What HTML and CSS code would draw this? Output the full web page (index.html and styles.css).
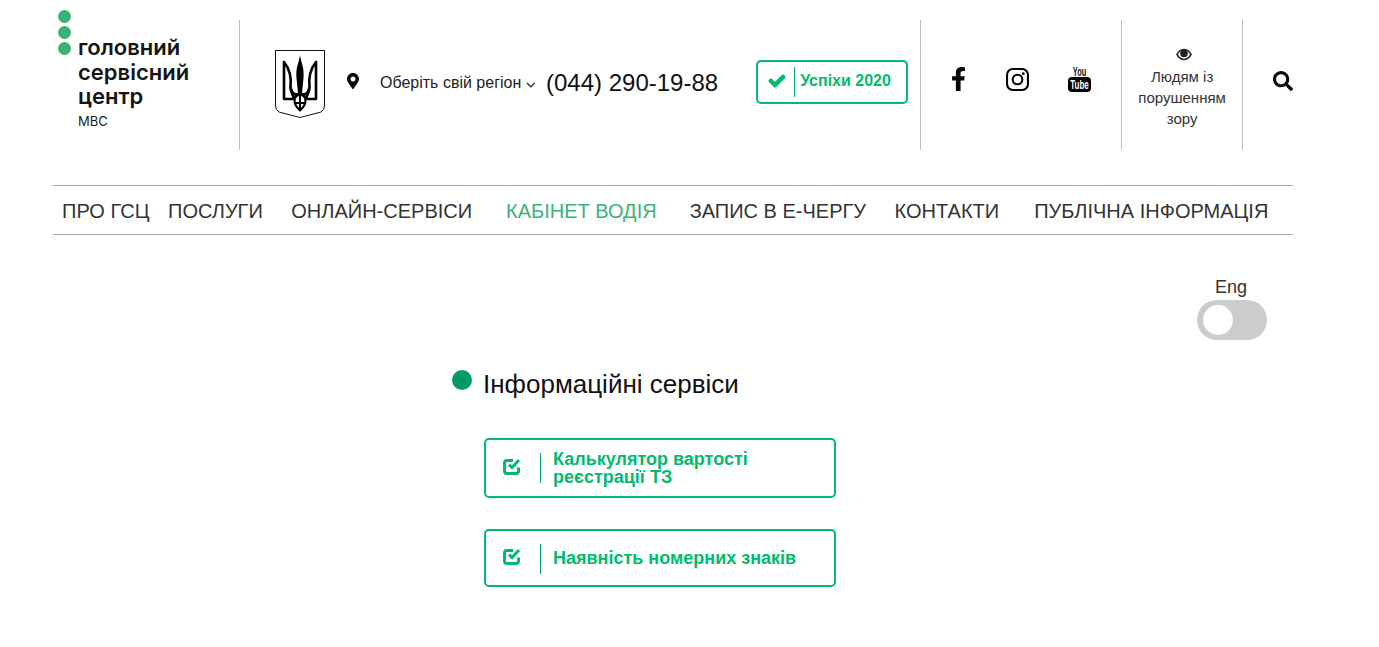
FILE: index.html
```html
<!DOCTYPE html>
<html lang="uk">
<head>
<meta charset="utf-8">
<title>Головний сервісний центр МВС</title>
<link rel="stylesheet" href="styles.css">
</head>
<body>
<div class="page">
  <header class="header">
    <a class="logo">
      <span class="logo-dots"><i></i><i></i><i></i></span>
      <span class="logo-text">
        <span class="logo-name">головний<br>сервісний<br>центр</span>
        <span class="logo-sub">МВС</span>
      </span>
    </a>
    <span class="divider"></span>
    <svg class="emblem" viewBox="0 0 50 68" aria-hidden="true">
      <path class="shield" d="M.5.5H49.500V56Q49.500 60 46 62L25 67.500 4 62Q.5 60 .5 56Z"/>
      <path class="spear" d="M25 5C26 13 29.500 17 28.500 28L27 43H23L21.500 28C20.500 17 24 13 25 5Z"/>
      <path class="prong" d="M9 12V49H19C18 44 15.500 43 15.500 37 16.500 28 15.500 20 9 12Z"/>
      <path class="prong" d="M41 12V49H31C32 44 34.500 43 34.500 37 33.500 28 34.500 20 41 12Z"/>
      <path class="prong" d="M15.500 37Q17 46 23 44M34.500 37Q33 46 27 44M19 49Q21 45 25 44 29 45 31 49"/>
      <path class="prong-thin" d="M20 49Q18 54 25 60.500 32 54 30 49M25 44V60M20.500 53H29.500"/>
    </svg>
    <svg class="marker" viewBox="0 0 384 512" aria-hidden="true"><path d="M172.268 501.67C26.97 291.031 0 268.413 0 192 0 85.961 85.961 0 192 0s192 85.961 192 192c0 76.413-26.97 99.031-172.268 309.67-9.535 13.774-29.93 13.773-39.464 0zM192 272c44.183 0 80-35.817 80-80s-35.817-80-80-80-80 35.817-80 80 35.817 80 80 80z"/></svg>
    <a class="region">Оберіть свій регіон
      <svg class="chevron" viewBox="0 0 10 6" aria-hidden="true"><path d="M1 1l4 4 4-4"/></svg>
    </a>
    <a class="phone">(044) 290-19-88</a>
    <a class="success">
      <svg class="success-check" viewBox="0 0 512 512" aria-hidden="true"><path d="M173.898 439.404l-166.4-166.4c-9.997-9.997-9.997-26.206 0-36.204l36.203-36.204c9.997-9.998 26.207-9.998 36.204 0L192 312.69 432.095 72.596c9.997-9.997 26.207-9.997 36.204 0l36.203 36.204c9.997 9.997 9.997 26.206 0 36.204l-294.4 294.401c-9.998 9.997-26.207 9.997-36.204-.001z"/></svg>
      <span class="success-rule"></span>
      <span class="success-text">Успіхи 2020</span>
    </a>
    <span class="divider divider-social"></span>
    <div class="social">
      <svg class="icon-fb" viewBox="0 0 320 512" aria-hidden="true"><path d="M279.14 288l14.22-92.66h-88.91v-60.13c0-25.35 12.42-50.06 52.24-50.06h40.42V6.26S260.43 0 225.36 0c-73.22 0-121.08 44.38-121.08 124.72v70.62H22.89V288h81.39v224h100.17V288z"/></svg>
      <svg class="icon-ig" viewBox="0 0 22 22" aria-hidden="true">
        <rect class="ig-line" x="1" y="1" width="20" height="20" rx="5.500"/>
        <circle class="ig-line" cx="11" cy="11" r="4.600"/>
        <circle cx="16.600" cy="5.400" r="1.300"/>
      </svg>
      <svg class="icon-yt" viewBox="0 -2 23 27" aria-hidden="true">
        <text class="yt-you" transform="translate(11.500 9) scale(.74 1.200)">You</text>
        <rect x="0" y="10" width="23" height="15" rx="4"/>
        <text class="yt-tube" transform="translate(11.500 21.500) scale(.8 1.250)">Tube</text>
      </svg>
    </div>
    <span class="divider"></span>
    <div class="vision">
      <svg class="eye" viewBox="0 0 16 13" aria-hidden="true">
        <path class="eye-white" d="M1 6.500C3 3 5.300 1.500 8 1.500S13 3 15 6.500C13 10 10.700 11.500 8 11.500S3 10 1 6.500Z"/>
        <circle cx="8" cy="5.500" r="3.800"/>
      </svg>
      <span class="vision-text">Людям із<br>порушенням<br>зору</span>
    </div>
    <span class="divider"></span>
    <svg class="search" viewBox="0 0 512 512" aria-hidden="true"><path d="M505 442.7L405.3 343c-4.5-4.5-10.6-7-17-7H372c27.6-35.3 44-79.7 44-128C416 93.1 322.9 0 208 0S0 93.1 0 208s93.1 208 208 208c48.3 0 92.7-16.4 128-44v16.3c0 6.4 2.5 12.5 7 17l99.7 99.7c9.4 9.4 24.6 9.4 33.9 0l28.3-28.3c9.4-9.4 9.4-24.6.1-34zM208 336c-70.7 0-128-57.2-128-128 0-70.7 57.2-128 128-128 70.7 0 128 57.2 128 128 0 70.7-57.2 128-128 128z"/></svg>
  </header>

  <nav class="nav">
    <a class="nav-item">ПРО ГСЦ</a>
    <a class="nav-item gap-s">ПОСЛУГИ</a>
    <a class="nav-item gap-m">ОНЛАЙН-СЕРВІСИ</a>
    <a class="nav-item gap-l nav-active">КАБІНЕТ ВОДІЯ</a>
    <a class="nav-item gap-k">ЗАПИС В Е-ЧЕРГУ</a>
    <a class="nav-item gap-m">КОНТАКТИ</a>
    <a class="nav-item gap-x">ПУБЛІЧНА ІНФОРМАЦІЯ</a>
  </nav>

  <div class="lang">
    <span class="lang-label">Eng</span>
    <span class="toggle"><span class="knob"></span></span>
  </div>

  <main class="services">
    <h1 class="services-title"><span class="title-dot"></span>Інформаційні сервіси</h1>
    <div class="cards">
      <a class="card">
        <svg class="card-icon" viewBox="0 0 18 18" aria-hidden="true">
          <path class="card-box" d="M10 3.500H4Q1.500 3.500 1.500 6V14Q1.500 16.500 4 16.500H13Q15.500 16.500 15.500 14V10.500"/>
          <path class="card-tick" d="M6 7.500L9 10.500 16 3"/>
        </svg>
        <span class="card-rule"></span>
        <span class="card-text">Калькулятор вартості<br>реєстрації ТЗ</span>
      </a>
      <a class="card card-short">
        <svg class="card-icon" viewBox="0 0 18 18" aria-hidden="true">
          <path class="card-box" d="M10 3.500H4Q1.500 3.500 1.500 6V14Q1.500 16.500 4 16.500H13Q15.500 16.500 15.500 14V10.500"/>
          <path class="card-tick" d="M6 7.500L9 10.500 16 3"/>
        </svg>
        <span class="card-rule"></span>
        <span class="card-text">Наявність номерних знаків</span>
      </a>
    </div>
  </main>
</div>
</body>
</html>
```
FILE: styles.css
```css
* { box-sizing: border-box; }
html, body { margin: 0; padding: 0; background: #fff; }
body { font-family: "Liberation Sans", Arial, sans-serif; color: #111; overflow: hidden; }
.page { width: 1240px; margin-left: 53px; }

.header { display: flex; align-items: flex-start; height: 150px; }
.divider { flex: none; width: 1px; height: 130px; margin-top: 20px; background: #bdbdbd; }

.logo { flex: none; width: 186px; display: flex; padding: 10px 0 0 5px; }
.logo-dots { display: flex; flex-direction: column; gap: 3px; width: 20px; flex: none; }
.logo-dots i { display: block; width: 13px; height: 13px; border-radius: 50%; background: #3bb273; }
.logo-text { display: flex; flex-direction: column; padding-top: 25px; }
.logo-name { font-family: Inter, "Noto Sans", sans-serif; font-weight: 600; font-size: 22px; line-height: 24.500px; color: #151515; white-space: nowrap; }
.logo-sub { font-family: Inter, "Noto Sans", sans-serif; font-size: 13px; line-height: 16px; margin-top: 4px; color: #222; }

.emblem { flex: none; width: 50px; height: 68px; margin: 50px 0 0 35px; }
.shield { fill: #fff; stroke: #111; stroke-width: 1; }
.spear { fill: #000; }
.prong { fill: none; stroke: #000; stroke-width: 2.600; stroke-linejoin: round; }
.prong-thin { fill: none; stroke: #000; stroke-width: 2; stroke-linejoin: round; }

.marker { flex: none; width: 12px; height: 16px; margin: 73px 0 0 22px; fill: #0b0b0b; }
.region { flex: none; display: flex; align-items: center; gap: 5px; width: 156px; margin: 73px 0 0 21px; font-size: 16px; line-height: 20px; color: #222; white-space: nowrap; }
.chevron { width: 10px; height: 6px; margin-top: 3px; fill: none; stroke: #222; stroke-width: 1.300; }
.phone { flex: none; margin: 69px 0 0 10px; font-size: 24px; line-height: 28px; color: #111; white-space: nowrap; }

.success { flex: none; display: flex; align-items: center; width: 152px; height: 44px; margin: 60px 0 0 38px; border: 2px solid #00bb6f; border-radius: 5px; }
.success-check { width: 16px; height: 16px; margin: -3px 0 0 11px; fill: #00bb6f; stroke: #00bb6f; stroke-width: 36; overflow: visible; }
.success-rule { width: 1px; height: 30px; margin-left: 9px; background: #00a561; }
.success-text { margin: -3px 0 0 5px; font-size: 16px; font-weight: 700; color: #00bb6f; white-space: nowrap; }
.divider-social { margin-left: 12px; }

.social { flex: none; width: 200px; display: flex; align-items: flex-start; padding-top: 67px; }
.icon-fb { width: 15px; height: 24px; margin-left: 30px; fill: #050505; }
.icon-ig { width: 23px; height: 23px; margin: 1px 0 0 40px; }
.ig-line { fill: none; stroke: #050505; stroke-width: 2; }
.icon-yt { width: 23px; height: 27px; margin: -2px 0 0 39px; }
.yt-you { font-size: 10px; font-weight: 700; text-anchor: middle; fill: #111; }
.yt-tube { font-size: 10px; font-weight: 700; text-anchor: middle; fill: #fff; }

.vision { flex: none; width: 120px; display: flex; flex-direction: column; align-items: center; padding-top: 48px; }
.eye { width: 16px; height: 13px; margin-left: 4px; fill: #2e2014; }
.eye-white { fill: #fff; stroke: #2a2a2a; stroke-width: 1.600; }
.vision-text { margin-top: 5px; font-size: 15px; line-height: 21px; text-align: center; color: #333; white-space: nowrap; }

.search { flex: none; width: 20px; height: 20px; margin: 71px 0 0 30px; fill: #0a0a0a; }

.nav { display: flex; align-items: center; height: 50px; margin-top: 35px; padding: 1px 0 0 9px; border-top: 1px solid #a8a8a8; border-bottom: 1px solid #a8a8a8; }
.nav-item { font-size: 20px; line-height: 24px; color: #333; white-space: nowrap; }
.gap-s { margin-left: 18.500px; }
.gap-m { margin-left: 28.500px; }
.gap-l { margin-left: 34px; }
.gap-k { margin-left: 33px; }
.gap-x { margin-left: 35px; }
.nav-active { color: #3cb27a; }

.lang { display: flex; flex-direction: column; align-items: center; width: 70px; margin: 41px 0 0 1144px; }
.lang-label { padding-right: 2px; font-size: 18px; line-height: 22px; color: #333; }
.toggle { display: block; width: 70px; height: 40px; margin-top: 2px; padding: 5px 6px; border-radius: 20px; background: #ccc; }
.knob { display: block; width: 30px; height: 30px; border-radius: 50%; background: #fff; }

.services { margin: 30px 0 0 399px; }
.services-title { display: flex; align-items: flex-start; margin: 0; font-size: 26px; font-weight: 400; line-height: 28px; color: #111; }
.title-dot { flex: none; width: 20px; height: 20px; margin-right: 11px; border-radius: 50%; background: #009b67; }
.cards { display: flex; flex-direction: column; gap: 31px; margin: 40px 0 0 32px; }
.card { display: flex; align-items: center; width: 352px; height: 60px; border: 2px solid #00bb6f; border-radius: 5px; }
.card-short { height: 58px; }
.card-short .card-rule { margin-top: 2px; }
.card-icon { flex: none; width: 18px; height: 18px; margin: -4px 0 0 17px; }
.card-box { fill: none; stroke: #00bb6f; stroke-width: 3; }
.card-tick { fill: none; stroke: #00bb6f; stroke-width: 3; }
.card-rule { flex: none; width: 1px; height: 30px; margin-left: 19px; background: #00a561; }
.card-text { margin-left: 12px; font-size: 18px; font-weight: 700; line-height: 18px; color: #00bb6f; }
```
